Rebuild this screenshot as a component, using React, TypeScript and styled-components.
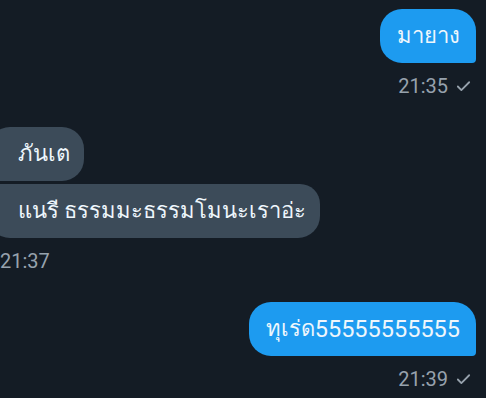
import styled, { createGlobalStyle } from "styled-components";
import { Check } from "lucide-react";

const GlobalStyle = createGlobalStyle`
  html, body {
    margin: 0;
    padding: 0;
    background: #141c25;
  }
  body {
    font-family: Roboto, "Noto Sans", "DejaVu Sans", sans-serif;
    overflow: hidden;
  }
`;

const Thread = styled.div`
  width: 486px;
  height: 398px;
  box-sizing: border-box;
  padding: 9px 10px 0 0;
  display: flex;
  flex-direction: column;
  overflow: hidden;
`;

const Group = styled.div<{ $out?: boolean }>`
  display: flex;
  flex-direction: column;
  align-items: ${(p) => (p.$out ? "flex-end" : "flex-start")};
  gap: 3px;
  margin-bottom: 30px;
`;

const Bubble = styled.div<{ $out?: boolean; $first?: boolean }>`
  box-sizing: border-box;
  height: 54px;
  display: flex;
  align-items: center;
  font-size: 22px;
  line-height: 30px;
  color: #eef6fc;
  white-space: nowrap;
  background: ${(p) => (p.$out ? "#1d9bf0" : "#3c4b59")};
  padding: ${(p) => (p.$out ? "0 16px 0 17px" : "0 14px 0 30px")};
  margin-left: ${(p) => (p.$out ? "0" : "-12px")};
  border-radius: ${(p) =>
    p.$out ? "22px 22px 4px 22px" : p.$first ? "22px 22px 22px 4px" : "4px 20px 22px 22px"};
`;

const Digits = styled.span`
  font-size: 23.5px;
`;

const Meta = styled.div<{ $out?: boolean }>`
  display: flex;
  align-items: center;
  gap: 7px;
  margin-top: 9px;
  margin-right: ${(p) => (p.$out ? "4px" : "0")};
  font-size: 20px;
  line-height: 22px;
  color: #97a2ad;
`;

type Msg = { texts: string[]; time: string; out?: boolean };

const messages: Msg[] = [
  { texts: ["มายาง"], time: "21:35", out: true },
  { texts: ["ภันเต", "แนรี ธรรมมะธรรมโมนะเราอ่ะ"], time: "21:37" },
  { texts: ["ทุเร่ด55555555555"], time: "21:39", out: true },
];

// digits in the reference render a little wider than the Thai text around them
const renderText = (t: string) =>
  t.split(/(\d+)/).map((part, k) => (/^\d+$/.test(part) ? <Digits key={k}>{part}</Digits> : part));

export default function App() {
  return (
    <>
      <GlobalStyle />
      <Thread>
        {messages.map((m, i) => (
          <Group key={i} $out={m.out}>
            {m.texts.map((t, j) => (
              <Bubble key={j} $out={m.out} $first={j === 0 && m.texts.length > 1}>
                {renderText(t)}
              </Bubble>
            ))}
            <Meta $out={m.out}>
              {m.time}
              {m.out && <Check size={17} strokeWidth={2.5} />}
            </Meta>
          </Group>
        ))}
      </Thread>
    </>
  );
}
